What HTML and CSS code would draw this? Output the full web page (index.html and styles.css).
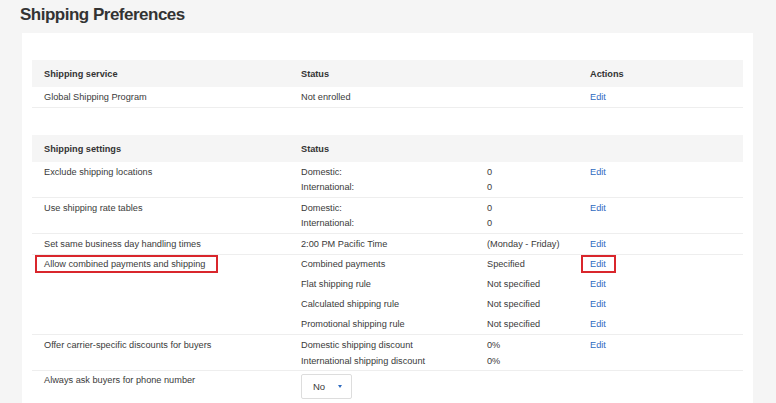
FILE: index.html
```html
<!DOCTYPE html>
<html>
<head>
<meta charset="utf-8">
<link rel="stylesheet" href="styles.css">
</head>
<body>
<h1 class="title">Shipping Preferences</h1>
<div class="card">
  <div class="table">
    <div class="thead">
      <div class="c1">Shipping service</div>
      <div class="c2">Status</div>
      <div class="c3"></div>
      <div class="c4">Actions</div>
    </div>
    <div class="row">
      <div class="c1">Global Shipping Program</div>
      <div class="lines">
        <div class="line"><div class="c2">Not enrolled</div><div class="c3"></div><div class="c4"><a class="edit">Edit</a></div></div>
      </div>
    </div>
  </div>

  <div class="table">
    <div class="thead">
      <div class="c1">Shipping settings</div>
      <div class="c2">Status</div>
      <div class="c3"></div>
      <div class="c4"></div>
    </div>
    <div class="row lh15">
      <div class="c1">Exclude shipping locations</div>
      <div class="lines">
        <div class="line"><div class="c2">Domestic:</div><div class="c3">0</div><div class="c4"><a class="edit">Edit</a></div></div>
        <div class="line"><div class="c2">International:</div><div class="c3">0</div><div class="c4"></div></div>
      </div>
    </div>
    <div class="row lh15">
      <div class="c1">Use shipping rate tables</div>
      <div class="lines">
        <div class="line"><div class="c2">Domestic:</div><div class="c3">0</div><div class="c4"><a class="edit">Edit</a></div></div>
        <div class="line"><div class="c2">International:</div><div class="c3">0</div><div class="c4"></div></div>
      </div>
    </div>
    <div class="row">
      <div class="c1">Set same business day handling times</div>
      <div class="lines">
        <div class="line"><div class="c2">2:00 PM Pacific Time</div><div class="c3">(Monday - Friday)</div><div class="c4"><a class="edit">Edit</a></div></div>
      </div>
    </div>
    <div class="row lh20">
      <div class="c1"><span class="mark mark-wide">Allow combined payments and shipping</span></div>
      <div class="lines">
        <div class="line"><div class="c2">Combined payments</div><div class="c3">Specified</div><div class="c4"><a class="edit mark mark-edit">Edit</a></div></div>
        <div class="line"><div class="c2">Flat shipping rule</div><div class="c3">Not specified</div><div class="c4"><a class="edit">Edit</a></div></div>
        <div class="line"><div class="c2">Calculated shipping rule</div><div class="c3">Not specified</div><div class="c4"><a class="edit">Edit</a></div></div>
        <div class="line"><div class="c2">Promotional shipping rule</div><div class="c3">Not specified</div><div class="c4"><a class="edit">Edit</a></div></div>
      </div>
    </div>
    <div class="row lh16">
      <div class="c1">Offer carrier-specific discounts for buyers</div>
      <div class="lines">
        <div class="line"><div class="c2">Domestic shipping discount</div><div class="c3">0%</div><div class="c4"><a class="edit">Edit</a></div></div>
        <div class="line"><div class="c2">International shipping discount</div><div class="c3">0%</div><div class="c4"></div></div>
      </div>
    </div>
    <div class="row last">
      <div class="c1">Always ask buyers for phone number</div>
      <div class="lines">
        <div class="line"><div class="c2"><div class="select"><span>No</span><span class="caret"></span></div></div></div>
      </div>
    </div>
  </div>
</div>
</body>
</html>
```
FILE: styles.css
```css
html, body {
  margin: 0;
  padding: 0;
  background: #f5f5f5;
  font-family: "Liberation Sans", Arial, sans-serif;
  color: #333;
}
body {
  padding: 0 23px 0 20px;
  height: 403px;
  overflow: hidden;
}
.title {
  margin: 0;
  padding-top: 5px;
  height: 28px;
  box-sizing: border-box;
  height: 33px;
  font-size: 17px;
  letter-spacing: -0.5px;
  font-weight: bold;
  line-height: 20px;
  color: #333;
}
.card {
  margin-left: 2px;
  background: #fff;
  padding: 27px 10px 0 10px;
  height: 370px;
  box-sizing: border-box;
  overflow: hidden;
}
.table {
  font-size: 9.2px;
  margin-bottom: 27px;
}
.table:last-child { margin-bottom: 0; }
.thead {
  display: flex;
  background: #f5f5f5;
  height: 27px;
  align-items: center;
  padding-left: 12px;
  font-weight: 600;
  color: #333;
}
.c1 { width: 257px; flex: none; }
.c2 { width: 186px; flex: none; }
.c3 { width: 103px; flex: none; }
.c4 { flex: 1; }
.row {
  display: flex;
  padding: 3px 0 3px 12px;
  line-height: 14px;
  border-bottom: 1px solid #eee;
  color: #3a3a3a;
}
.row.lh15 { line-height: 15px; padding: 3px 0 2px 12px; }
.row.lh20 { line-height: 20px; padding: 0 0 0 12px; margin-top: -1px; }
.row.lh16 { line-height: 16px; padding: 2px 0 1px 12px; }
.row.last { border-bottom: none; padding-top: 2px; padding-bottom: 0; }
.lines { flex: 1; display: flex; flex-direction: column; }
.line { display: flex; }
.edit {
  color: #2f6bbf;
  text-decoration: none;
}
.mark { position: relative; }
.mark::after {
  content: "";
  position: absolute;
  border: 2px solid #d9262c;
}
.mark-wide::after { left: -9px; right: -13px; top: -4px; bottom: -4px; }
.mark-edit::after { left: -9px; right: -10px; top: -4px; bottom: -4px; }
.select {
  display: flex;
  align-items: center;
  width: 51px;
  height: 25px;
  box-sizing: border-box;
  border: 1px solid #ddd;
  border-radius: 2px;
  padding-left: 11px;
  font-size: 9.5px;
  margin-top: 1px;
}
.caret {
  margin-left: 13px;
  width: 0;
  height: 0;
  border-left: 2.5px solid transparent;
  border-right: 2.5px solid transparent;
  border-top: 3px solid #2f6bbf;
}
```
